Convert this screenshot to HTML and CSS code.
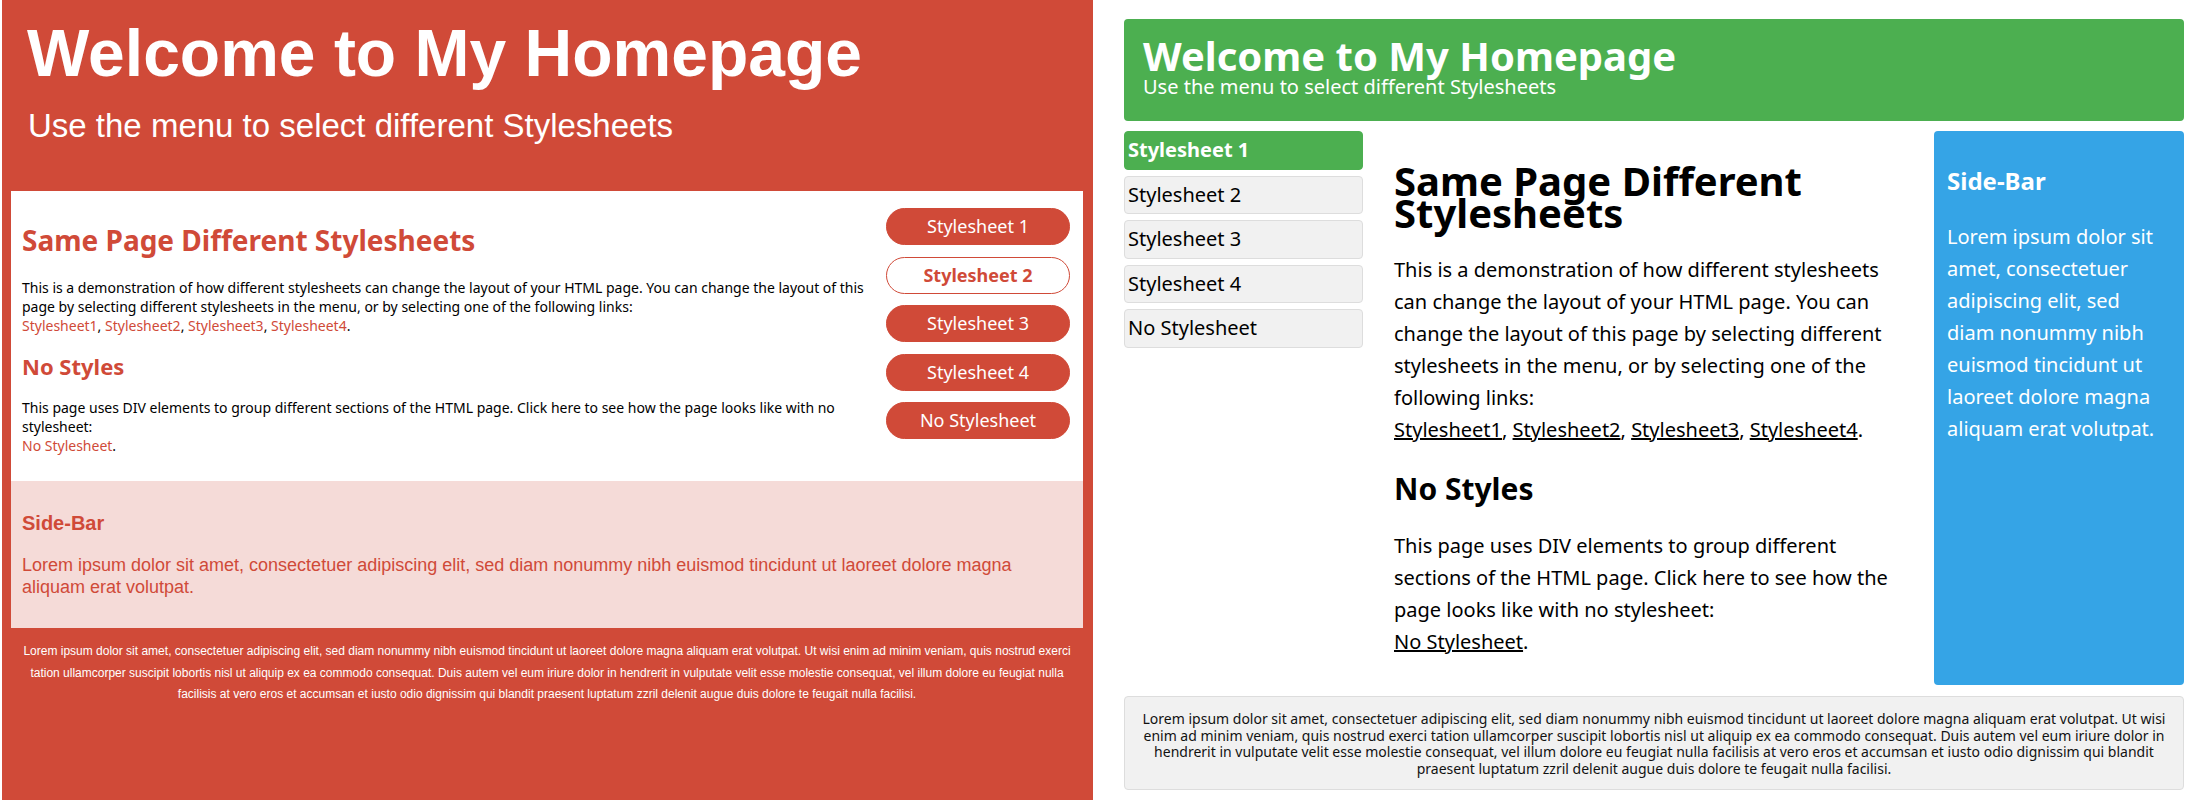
FILE: index.html
```html
<!DOCTYPE html>
<html lang="en">
<head>
<meta charset="utf-8">
<title>Same Page Different Stylesheets</title>
<link rel="stylesheet" href="styles.css">
</head>
<body>
<div class="page">
  <section class="red">
    <header class="red-header">
      <h1>Welcome to My Homepage</h1>
      <p>Use the menu to select different Stylesheets</p>
    </header>
    <div class="red-box">
      <div class="red-main">
        <h2>Same Page Different Stylesheets</h2>
        <p>This is a demonstration of how different stylesheets can change the layout of your HTML page. You can change the layout of this page by selecting different stylesheets in the menu, or by selecting one of the following links:<br>
        <a href="#">Stylesheet1</a>, <a href="#">Stylesheet2</a>, <a href="#">Stylesheet3</a>, <a href="#">Stylesheet4</a>.</p>
        <h3>No Styles</h3>
        <p>This page uses DIV elements to group different sections of the HTML page. Click here to see how the page looks like with no stylesheet:<br>
        <a href="#">No Stylesheet</a>.</p>
      </div>
      <nav class="red-menu">
        <a href="#" class="pill">Stylesheet 1</a>
        <a href="#" class="pill pill-active">Stylesheet 2</a>
        <a href="#" class="pill">Stylesheet 3</a>
        <a href="#" class="pill">Stylesheet 4</a>
        <a href="#" class="pill">No Stylesheet</a>
      </nav>
    </div>
    <aside class="red-side">
      <h3>Side-Bar</h3>
      <p>Lorem ipsum dolor sit amet, consectetuer adipiscing elit, sed diam nonummy nibh euismod tincidunt ut laoreet dolore magna aliquam erat volutpat.</p>
    </aside>
    <footer class="red-footer">
      <p>Lorem ipsum dolor sit amet, consectetuer adipiscing elit, sed diam nonummy nibh euismod tincidunt ut laoreet dolore magna aliquam erat volutpat. Ut wisi enim ad minim veniam, quis nostrud exerci tation ullamcorper suscipit lobortis nisl ut aliquip ex ea commodo consequat. Duis autem vel eum iriure dolor in hendrerit in vulputate velit esse molestie consequat, vel illum dolore eu feugiat nulla facilisis at vero eros et accumsan et iusto odio dignissim qui blandit praesent luptatum zzril delenit augue duis dolore te feugait nulla facilisi.</p>
    </footer>
  </section>

  <section class="green">
    <header class="green-header">
      <h1>Welcome to My Homepage</h1>
      <p>Use the menu to select different Stylesheets</p>
    </header>
    <div class="green-row">
      <nav class="green-menu">
        <a href="#" class="item item-active">Stylesheet 1</a>
        <a href="#" class="item">Stylesheet 2</a>
        <a href="#" class="item">Stylesheet 3</a>
        <a href="#" class="item">Stylesheet 4</a>
        <a href="#" class="item">No Stylesheet</a>
      </nav>
      <div class="green-main">
        <h2>Same Page Different Stylesheets</h2>
        <p>This is a demonstration of how different stylesheets can change the layout of your HTML page. You can change the layout of this page by selecting different stylesheets in the menu, or by selecting one of the following links:<br>
        <a href="#">Stylesheet1</a>, <a href="#">Stylesheet2</a>, <a href="#">Stylesheet3</a>, <a href="#">Stylesheet4</a>.</p>
        <h3>No Styles</h3>
        <p>This page uses DIV elements to group different sections of the HTML page. Click here to see how the page looks like with no stylesheet:<br>
        <a href="#">No Stylesheet</a>.</p>
      </div>
      <aside class="green-side">
        <h3>Side-Bar</h3>
        <p>Lorem ipsum dolor sit amet, consectetuer adipiscing elit, sed diam nonummy nibh euismod tincidunt ut laoreet dolore magna aliquam erat volutpat.</p>
      </aside>
    </div>
    <footer class="green-footer">
      <p>Lorem ipsum dolor sit amet, consectetuer adipiscing elit, sed diam nonummy nibh euismod tincidunt ut laoreet dolore magna aliquam erat volutpat. Ut wisi enim ad minim veniam, quis nostrud exerci tation ullamcorper suscipit lobortis nisl ut aliquip ex ea commodo consequat. Duis autem vel eum iriure dolor in hendrerit in vulputate velit esse molestie consequat, vel illum dolore eu feugiat nulla facilisis at vero eros et accumsan et iusto odio dignissim qui blandit praesent luptatum zzril delenit augue duis dolore te feugait nulla facilisi.</p>
    </footer>
  </section>
</div>
</body>
</html>
```
FILE: styles.css
```css
* { box-sizing: border-box; }
html, body { margin: 0; padding: 0; background: #fff; }
body { width: 2200px; height: 800px; overflow: hidden; }

.page { display: flex; align-items: flex-start; }

/* ---------- Left: red stylesheet ---------- */
.red {
  width: 1091px;
  height: 800px;
  margin-left: 2px;
  padding: 0 10px 0 9px;
  background: #d04a38;
}
.red-header {
  height: 191px;
  padding: 15px 16px 0;
  color: #fff;
  font-family: "Liberation Sans", Arial, sans-serif;
}
.red-header h1 {
  margin: 0;
  font-size: 66px;
  font-weight: bold;
  line-height: normal;
}
.red-header p {
  margin: 16px 0 0 1px;
  font-size: 33px;
  line-height: normal;
}
.red-box {
  display: grid;
  grid-template-columns: 1fr 184px;
  column-gap: 11px;
  padding: 17px 13px 26px 11px;
  background: #fff;
  font-family: "Noto Sans", sans-serif;
}
.red-main h2 {
  margin: 13px 0 19px;
  font-size: 28px;
  font-weight: bold;
  line-height: normal;
  color: #d04a38;
}
.red-main h3 {
  margin: 16px 0 17px;
  font-size: 22px;
  font-weight: bold;
  line-height: normal;
  color: #d04a38;
}
.red-main p {
  margin: 0;
  font-size: 14px;
  line-height: normal;
  color: #000;
}
.red-main a { color: #d04a38; text-decoration: none; }
.red-menu { display: flex; flex-direction: column; gap: 11.5px; }
.pill {
  display: block;
  height: 37px;
  border: 1px solid #d04a38;
  border-radius: 19px;
  background: #d04a38;
  color: #fff;
  font-size: 18px;
  line-height: 34px;
  text-align: center;
  text-decoration: none;
}
.pill-active { background: #fff; color: #d04a38; font-weight: bold; }

.red-side {
  padding: 31px 11px 30px;
  background: #f5dbd8;
  color: #d04a38;
  font-family: "Liberation Sans", Arial, sans-serif;
}
.red-side h3 { margin: 0 0 19px; font-size: 20px; line-height: normal; }
.red-side p { margin: 0; font-size: 18px; line-height: 22px; }

.red-footer {
  padding: 13px 11px 0;
  color: #fff;
  text-align: center;
  font-family: "Liberation Sans", Arial, sans-serif;
}
.red-footer p { margin: 0; font-size: 12px; line-height: 21.6px; }

/* ---------- Right: green stylesheet ---------- */
.green {
  width: 1060px;
  margin-left: 31px;
  padding-top: 19px;
  font-family: "Noto Sans", sans-serif;
  color: #000;
}
.green-header {
  height: 102px;
  padding: 17px 19px 0;
  border-radius: 4px;
  background: #4caf50;
  color: #fff;
}
.green-header h1 { margin: 0; font-size: 40px; font-weight: bold; line-height: 40px; }
.green-header p { margin: 0; font-size: 20px; line-height: 22px; }

.green-row {
  display: grid;
  grid-template-columns: 239px 1fr 250px;
  column-gap: 30px;
  margin-top: 10px;
}
.green-menu { display: flex; flex-direction: column; gap: 6px; }
.item {
  display: block;
  padding: 0 3px;
  border: 1px solid #ddd;
  border-radius: 4px;
  background: #f1f1f1;
  color: #000;
  font-size: 20px;
  line-height: 36.5px;
  text-decoration: none;
}
.item-active { background: #4caf50; border-color: #4caf50; color: #fff; font-weight: bold; }

.green-main { padding: 34px 0 27px 1px; }
.green-main h2 { margin: 0 0 25px; font-size: 40px; font-weight: bold; line-height: 32px; }
.green-main h3 { margin: 27px 0 25px; font-size: 30px; font-weight: bold; line-height: 32px; }
.green-main p { margin: 0; font-size: 20px; line-height: 32px; }
.green-main a { color: #000; text-decoration: underline; }

.green-side {
  padding: 34px 13px;
  border-radius: 4px;
  background: #35a4e6;
  color: #fff;
}
.green-side h3 { margin: 0 0 24px; font-size: 24px; font-weight: bold; line-height: 32px; }
.green-side p { margin: 0; font-size: 20px; line-height: 32px; }

.green-footer {
  margin-top: 11px;
  padding: 14px 16px 11px;
  border: 1px solid #ddd;
  border-radius: 4px;
  background: #f1f1f1;
  text-align: center;
}
.green-footer p { margin: 0; font-size: 14px; line-height: 16.7px; color: #111; }
```
